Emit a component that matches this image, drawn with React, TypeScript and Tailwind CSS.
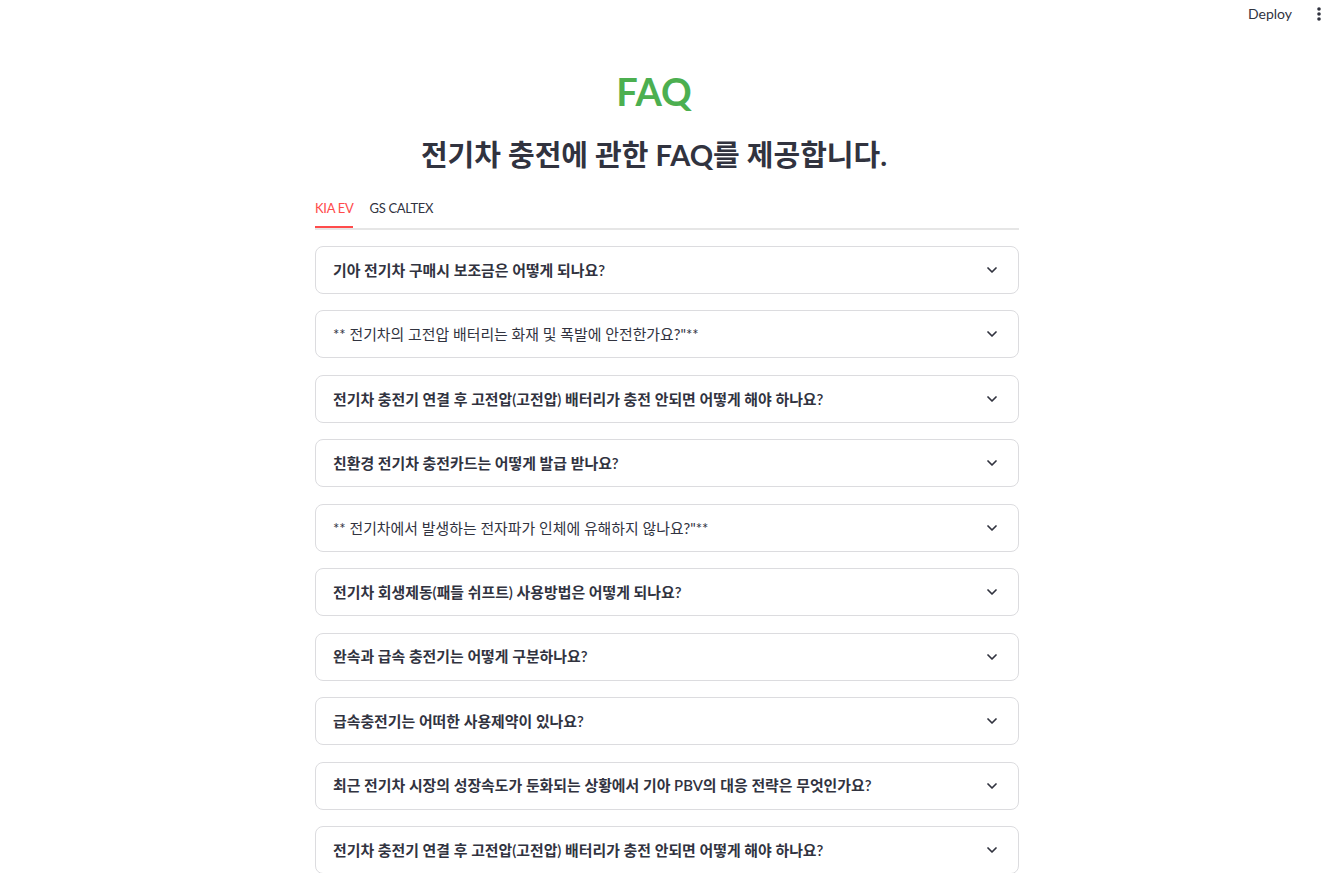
import React from "react";

const items: { q: string; bold: boolean }[] = [
  { q: "기아 전기차 구매시 보조금은 어떻게 되나요?", bold: true },
  { q: "** 전기차의 고전압 배터리는 화재 및 폭발에 안전한가요?\"**", bold: false },
  { q: "전기차 충전기 연결 후 고전압(고전압) 배터리가 충전 안되면 어떻게 해야 하나요?", bold: true },
  { q: "친환경 전기차 충전카드는 어떻게 발급 받나요?", bold: true },
  { q: "** 전기차에서 발생하는 전자파가 인체에 유해하지 않나요?\"**", bold: false },
  { q: "전기차 회생제동(패들 쉬프트) 사용방법은 어떻게 되나요?", bold: true },
  { q: "완속과 급속 충전기는 어떻게 구분하나요?", bold: true },
  { q: "급속충전기는 어떠한 사용제약이 있나요?", bold: true },
  { q: "최근 전기차 시장의 성장속도가 둔화되는 상황에서 기아 PBV의 대응 전략은 무엇인가요?", bold: true },
  { q: "전기차 충전기 연결 후 고전압(고전압) 배터리가 충전 안되면 어떻게 해야 하나요?", bold: true },
];

const font = { fontFamily: 'Lato, "Noto Sans CJK KR", sans-serif' };

function Chevron() {
  return (
    <svg width="16" height="16" viewBox="0 0 24 24" fill="none" stroke="#31333f" strokeWidth="2.6" strokeLinecap="round" strokeLinejoin="round">
      <path d="M6 9l6 6 6-6" />
    </svg>
  );
}

export default function App() {
  return (
    <div className="min-h-screen bg-white text-[#31333f] overflow-hidden" style={font}>
      <div className="h-[28px] flex items-center justify-end pr-[10px]">
        <span className="text-[14px] text-[#31333f] mr-[24px] leading-none">Deploy</span>
        <svg width="6" height="16" viewBox="0 0 6 16" fill="#31333f">
          <circle cx="3" cy="3" r="1.8" />
          <circle cx="3" cy="8" r="1.8" />
          <circle cx="3" cy="13" r="1.8" />
        </svg>
      </div>
      <div className="pl-[2px]">
        <div className="w-[704px] mx-auto">
          <h1 className="text-center text-[38px] font-bold text-[#4caf50] leading-none mt-[44px] pr-[26px]">FAQ</h1>
          <h2 className="text-center text-[29px] font-bold text-[#31333f] leading-none mt-[30px] pr-[26px]">
            전기차 충전에 관한 FAQ를 제공합니다.
          </h2>
          <div className="mt-[29px] flex border-b-2 border-[#e6e6e6] text-[13px] tracking-[-0.3px]">
            <div className="h-[30px] flex items-start pt-[1px] text-[#ff4b4b] border-b-2 border-[#ff4b4b] -mb-[2px]">KIA EV</div>
            <div className="h-[30px] flex items-start pt-[1px] ml-[16px]">GS CALTEX</div>
          </div>
          <div className="mt-[16px] flex flex-col gap-[16.45px]">
            {items.map((it, i) => (
              <div
                key={i}
                className="h-[48px] border border-[#dcdcdf] rounded-[8px] flex items-center justify-between pl-[17px] pr-[18px]"
              >
                <span className={"text-[14.9px] " + (it.bold ? "font-semibold" : "font-normal")}>{it.q}</span>
                <Chevron />
              </div>
            ))}
          </div>
        </div>
      </div>
    </div>
  );
}
